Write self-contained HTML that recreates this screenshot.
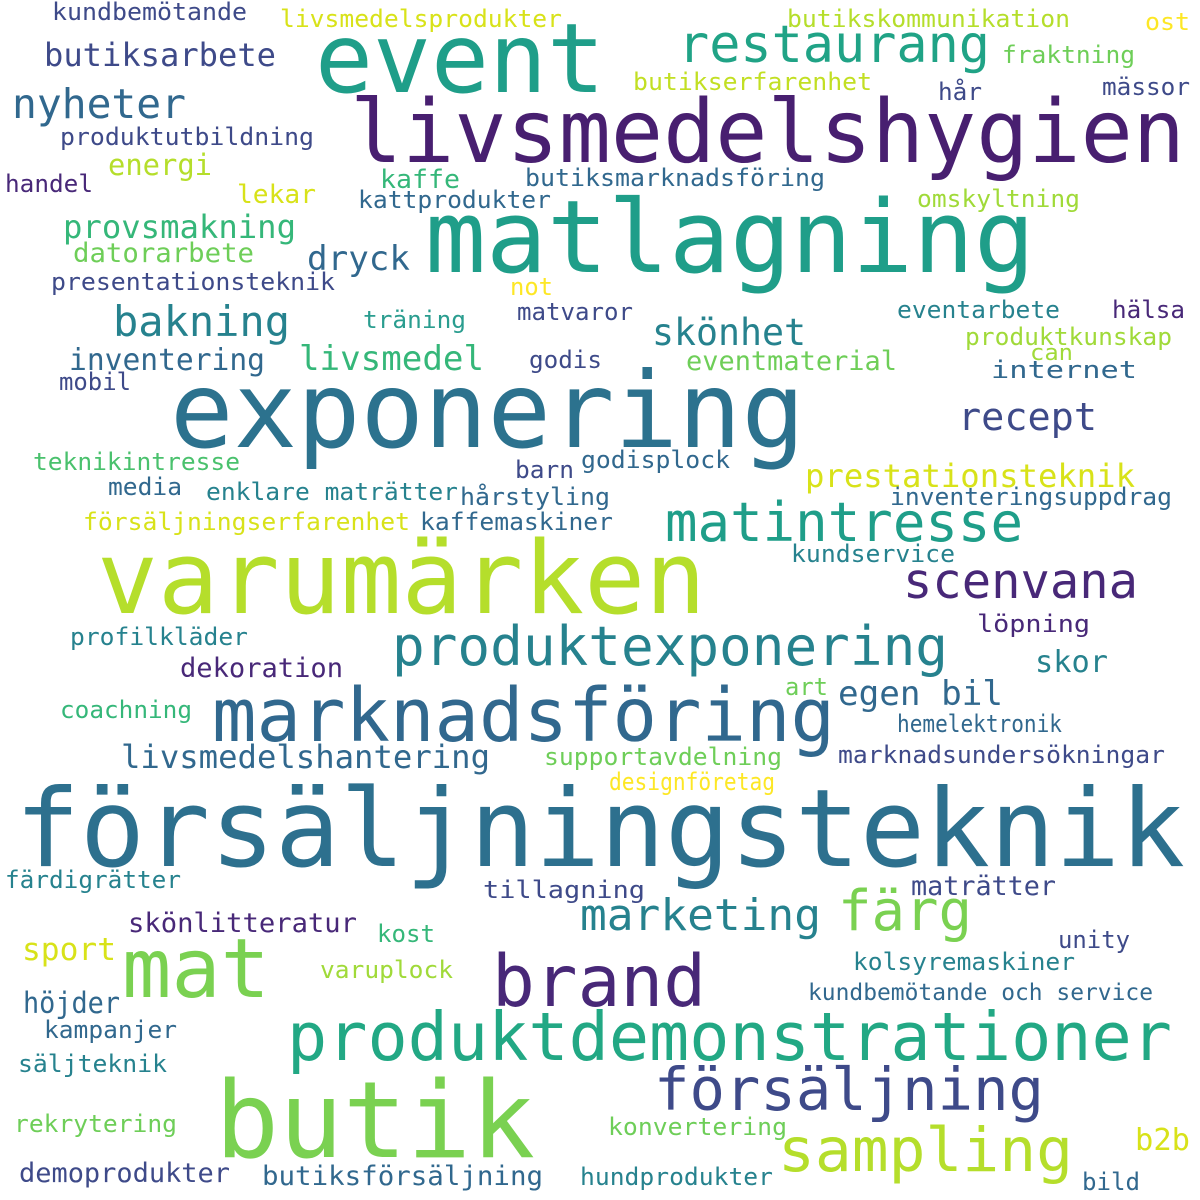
<!DOCTYPE html>
<html><head><meta charset="utf-8"><style>
html,body{margin:0;padding:0;background:#fff;}
svg{display:block}
text{font-family:"DejaVu Sans Mono","Liberation Mono",monospace;}
</style></head><body>
<svg width="1200" height="1200" viewBox="0 0 1200 1200" xmlns="http://www.w3.org/2000/svg">
<g lengthAdjust="spacingAndGlyphs">
<text x="52" y="20" font-size="24" fill="#3e4a89" textLength="195" lengthAdjust="spacingAndGlyphs">kundbemötande</text>
<text x="280" y="27" font-size="24" fill="#d8e219" textLength="282" lengthAdjust="spacingAndGlyphs">livsmedelsprodukter</text>
<text x="787" y="27" font-size="24" fill="#b5de2b" textLength="283" lengthAdjust="spacingAndGlyphs">butikskommunikation</text>
<text x="1145" y="30" font-size="24" fill="#fde725" textLength="45" lengthAdjust="spacingAndGlyphs">ost</text>
<text x="315" y="92" font-size="96" fill="#1f9e89" textLength="290" lengthAdjust="spacingAndGlyphs">event</text>
<text x="678" y="62" font-size="52" fill="#20a386" textLength="312" lengthAdjust="spacingAndGlyphs">restaurang</text>
<text x="1002" y="63" font-size="24" fill="#6ece58" textLength="133" lengthAdjust="spacingAndGlyphs">fraktning</text>
<text x="44" y="66" font-size="32" fill="#3e4a89" textLength="232" lengthAdjust="spacingAndGlyphs">butiksarbete</text>
<text x="633" y="90" font-size="24" fill="#c2df23" textLength="239" lengthAdjust="spacingAndGlyphs">butikserfarenhet</text>
<text x="938" y="100" font-size="24" fill="#3e4a89" textLength="44" lengthAdjust="spacingAndGlyphs">hår</text>
<text x="1102" y="95" font-size="24" fill="#3e4a89" textLength="88" lengthAdjust="spacingAndGlyphs">mässor</text>
<text x="350" y="162" font-size="87" fill="#481f70" textLength="835" lengthAdjust="spacingAndGlyphs">livsmedelshygien</text>
<text x="12" y="118" font-size="41" fill="#31688e" textLength="174" lengthAdjust="spacingAndGlyphs">nyheter</text>
<text x="60" y="145" font-size="24" fill="#3e4a89" textLength="254" lengthAdjust="spacingAndGlyphs">produktutbildning</text>
<text x="108" y="175" font-size="29" fill="#b5de2b" textLength="104" lengthAdjust="spacingAndGlyphs">energi</text>
<text x="5" y="192" font-size="24" fill="#482878" textLength="88" lengthAdjust="spacingAndGlyphs">handel</text>
<text x="425" y="272" font-size="101" fill="#1f9e89" textLength="610" lengthAdjust="spacingAndGlyphs">matlagning</text>
<text x="380" y="188" font-size="26" fill="#35b779" textLength="80" lengthAdjust="spacingAndGlyphs">kaffe</text>
<text x="525" y="186" font-size="24" fill="#31688e" textLength="300" lengthAdjust="spacingAndGlyphs">butiksmarknadsföring</text>
<text x="237" y="203" font-size="26" fill="#d8e219" textLength="79" lengthAdjust="spacingAndGlyphs">lekar</text>
<text x="358" y="208" font-size="24" fill="#31688e" textLength="193" lengthAdjust="spacingAndGlyphs">kattprodukter</text>
<text x="917" y="207" font-size="24" fill="#a0da39" textLength="163" lengthAdjust="spacingAndGlyphs">omskyltning</text>
<text x="63" y="238" font-size="32" fill="#35b779" textLength="233" lengthAdjust="spacingAndGlyphs">provsmakning</text>
<text x="73" y="262" font-size="27" fill="#6ece58" textLength="181" lengthAdjust="spacingAndGlyphs">datorarbete</text>
<text x="307" y="270" font-size="34" fill="#31688e" textLength="103" lengthAdjust="spacingAndGlyphs">dryck</text>
<text x="51" y="290" font-size="24" fill="#3e4a89" textLength="284" lengthAdjust="spacingAndGlyphs">presentationsteknik</text>
<text x="510" y="295" font-size="24" fill="#fde725" textLength="43" lengthAdjust="spacingAndGlyphs">not</text>
<text x="113" y="336" font-size="42" fill="#26828e" textLength="177" lengthAdjust="spacingAndGlyphs">bakning</text>
<text x="363" y="328" font-size="24" fill="#2a9d8f" textLength="103" lengthAdjust="spacingAndGlyphs">träning</text>
<text x="517" y="320" font-size="24" fill="#3e4a89" textLength="116" lengthAdjust="spacingAndGlyphs">matvaror</text>
<text x="897" y="318" font-size="24" fill="#26828e" textLength="163" lengthAdjust="spacingAndGlyphs">eventarbete</text>
<text x="1112" y="318" font-size="24" fill="#482878" textLength="73" lengthAdjust="spacingAndGlyphs">hälsa</text>
<text x="965" y="345" font-size="24" fill="#a0da39" textLength="207" lengthAdjust="spacingAndGlyphs">produktkunskap</text>
<text x="652" y="345" font-size="37" fill="#26828e" textLength="154" lengthAdjust="spacingAndGlyphs">skönhet</text>
<text x="1030" y="360" font-size="22" fill="#a0da39" textLength="43" lengthAdjust="spacingAndGlyphs">can</text>
<text x="69" y="370" font-size="30" fill="#31688e" textLength="196" lengthAdjust="spacingAndGlyphs">inventering</text>
<text x="299" y="370" font-size="34" fill="#35b779" textLength="185" lengthAdjust="spacingAndGlyphs">livsmedel</text>
<text x="529" y="368" font-size="24" fill="#3e4a89" textLength="73" lengthAdjust="spacingAndGlyphs">godis</text>
<text x="686" y="370" font-size="27" fill="#6ece58" textLength="211" lengthAdjust="spacingAndGlyphs">eventmaterial</text>
<text x="991" y="378" font-size="24" fill="#31688e" textLength="146" lengthAdjust="spacingAndGlyphs">internet</text>
<text x="59" y="390" font-size="24" fill="#3e4a89" textLength="72" lengthAdjust="spacingAndGlyphs">mobil</text>
<text x="170" y="447" font-size="105" fill="#2c728e" textLength="635" lengthAdjust="spacingAndGlyphs">exponering</text>
<text x="958" y="430" font-size="38" fill="#3e4a89" textLength="139" lengthAdjust="spacingAndGlyphs">recept</text>
<text x="33" y="470" font-size="24" fill="#4ac16d" textLength="207" lengthAdjust="spacingAndGlyphs">teknikintresse</text>
<text x="515" y="478" font-size="24" fill="#3e4a89" textLength="59" lengthAdjust="spacingAndGlyphs">barn</text>
<text x="581" y="468" font-size="24" fill="#31688e" textLength="149" lengthAdjust="spacingAndGlyphs">godisplock</text>
<text x="805" y="487" font-size="32" fill="#d8e219" textLength="330" lengthAdjust="spacingAndGlyphs">prestationsteknik</text>
<text x="108" y="495" font-size="24" fill="#31688e" textLength="74" lengthAdjust="spacingAndGlyphs">media</text>
<text x="206" y="500" font-size="24" fill="#26828e" textLength="252" lengthAdjust="spacingAndGlyphs">enklare maträtter</text>
<text x="460" y="505" font-size="24" fill="#31688e" textLength="150" lengthAdjust="spacingAndGlyphs">hårstyling</text>
<text x="890" y="505" font-size="24" fill="#31688e" textLength="282" lengthAdjust="spacingAndGlyphs">inventeringsuppdrag</text>
<text x="83" y="530" font-size="24" fill="#d8e219" textLength="327" lengthAdjust="spacingAndGlyphs">försäljningserfarenhet</text>
<text x="420" y="530" font-size="24" fill="#31688e" textLength="193" lengthAdjust="spacingAndGlyphs">kaffemaskiner</text>
<text x="665" y="541" font-size="54" fill="#1f9e89" textLength="358" lengthAdjust="spacingAndGlyphs">matintresse</text>
<text x="791" y="562" font-size="24" fill="#26828e" textLength="164" lengthAdjust="spacingAndGlyphs">kundservice</text>
<text x="97" y="613" font-size="101" fill="#b5de2b" textLength="609" lengthAdjust="spacingAndGlyphs">varumärken</text>
<text x="903" y="598" font-size="49" fill="#482878" textLength="235" lengthAdjust="spacingAndGlyphs">scenvana</text>
<text x="392" y="665" font-size="54" fill="#26828e" textLength="556" lengthAdjust="spacingAndGlyphs">produktexponering</text>
<text x="977" y="632" font-size="24" fill="#482878" textLength="113" lengthAdjust="spacingAndGlyphs">löpning</text>
<text x="70" y="645" font-size="24" fill="#26828e" textLength="178" lengthAdjust="spacingAndGlyphs">profilkläder</text>
<text x="180" y="677" font-size="27" fill="#482878" textLength="163" lengthAdjust="spacingAndGlyphs">dekoration</text>
<text x="1035" y="672" font-size="30" fill="#26828e" textLength="73" lengthAdjust="spacingAndGlyphs">skor</text>
<text x="785" y="695" font-size="24" fill="#6ece58" textLength="43" lengthAdjust="spacingAndGlyphs">art</text>
<text x="838" y="705" font-size="34" fill="#31688e" textLength="165" lengthAdjust="spacingAndGlyphs">egen bil</text>
<text x="60" y="718" font-size="24" fill="#35b779" textLength="132" lengthAdjust="spacingAndGlyphs">coachning</text>
<text x="212" y="741" font-size="74" fill="#31688e" textLength="623" lengthAdjust="spacingAndGlyphs">marknadsföring</text>
<text x="897" y="732" font-size="24" fill="#31688e" textLength="165" lengthAdjust="spacingAndGlyphs">hemelektronik</text>
<text x="121" y="768" font-size="32" fill="#31688e" textLength="369" lengthAdjust="spacingAndGlyphs">livsmedelshantering</text>
<text x="544" y="765" font-size="24" fill="#6ece58" textLength="238" lengthAdjust="spacingAndGlyphs">supportavdelning</text>
<text x="838" y="763" font-size="24" fill="#3e4a89" textLength="327" lengthAdjust="spacingAndGlyphs">marknadsundersökningar</text>
<text x="609" y="790" font-size="24" fill="#fde725" textLength="166" lengthAdjust="spacingAndGlyphs">designföretag</text>
<text x="15" y="866" font-size="108" fill="#2d708e" textLength="1170" lengthAdjust="spacingAndGlyphs">försäljningsteknik</text>
<text x="5" y="888" font-size="24" fill="#26828e" textLength="176" lengthAdjust="spacingAndGlyphs">färdigrätter</text>
<text x="483" y="898" font-size="24" fill="#3e4a89" textLength="162" lengthAdjust="spacingAndGlyphs">tillagning</text>
<text x="911" y="895" font-size="27" fill="#3e4a89" textLength="145" lengthAdjust="spacingAndGlyphs">maträtter</text>
<text x="580" y="930" font-size="44" fill="#26828e" textLength="241" lengthAdjust="spacingAndGlyphs">marketing</text>
<text x="838" y="930" font-size="56" fill="#7ad151" textLength="134" lengthAdjust="spacingAndGlyphs">färg</text>
<text x="128" y="932" font-size="27" fill="#482878" textLength="229" lengthAdjust="spacingAndGlyphs">skönlitteratur</text>
<text x="377" y="942" font-size="24" fill="#35b779" textLength="58" lengthAdjust="spacingAndGlyphs">kost</text>
<text x="1058" y="948" font-size="24" fill="#3e4a89" textLength="72" lengthAdjust="spacingAndGlyphs">unity</text>
<text x="22" y="960" font-size="31" fill="#d8e219" textLength="94" lengthAdjust="spacingAndGlyphs">sport</text>
<text x="122" y="997" font-size="82" fill="#7ad151" textLength="148" lengthAdjust="spacingAndGlyphs">mat</text>
<text x="492" y="1006" font-size="71" fill="#482878" textLength="214" lengthAdjust="spacingAndGlyphs">brand</text>
<text x="320" y="978" font-size="24" fill="#a0da39" textLength="133" lengthAdjust="spacingAndGlyphs">varuplock</text>
<text x="853" y="970" font-size="24" fill="#26828e" textLength="222" lengthAdjust="spacingAndGlyphs">kolsyremaskiner</text>
<text x="23" y="1013" font-size="29" fill="#31688e" textLength="97" lengthAdjust="spacingAndGlyphs">höjder</text>
<text x="808" y="1000" font-size="23" fill="#31688e" textLength="345" lengthAdjust="spacingAndGlyphs">kundbemötande och service</text>
<text x="44" y="1038" font-size="24" fill="#31688e" textLength="133" lengthAdjust="spacingAndGlyphs">kampanjer</text>
<text x="287" y="1060" font-size="67" fill="#22a884" textLength="885" lengthAdjust="spacingAndGlyphs">produktdemonstrationer</text>
<text x="18" y="1072" font-size="24" fill="#26828e" textLength="149" lengthAdjust="spacingAndGlyphs">säljteknik</text>
<text x="654" y="1110" font-size="59" fill="#3e4a89" textLength="390" lengthAdjust="spacingAndGlyphs">försäljning</text>
<text x="215" y="1157" font-size="106" fill="#7ad151" textLength="320" lengthAdjust="spacingAndGlyphs">butik</text>
<text x="14" y="1132" font-size="24" fill="#6ece58" textLength="163" lengthAdjust="spacingAndGlyphs">rekrytering</text>
<text x="608" y="1135" font-size="24" fill="#6ece58" textLength="179" lengthAdjust="spacingAndGlyphs">konvertering</text>
<text x="1135" y="1150" font-size="30" fill="#d8e219" textLength="55" lengthAdjust="spacingAndGlyphs">b2b</text>
<text x="778" y="1171" font-size="61" fill="#b5de2b" textLength="295" lengthAdjust="spacingAndGlyphs">sampling</text>
<text x="19" y="1182" font-size="27" fill="#3e4a89" textLength="211" lengthAdjust="spacingAndGlyphs">demoprodukter</text>
<text x="262" y="1185" font-size="27" fill="#31688e" textLength="281" lengthAdjust="spacingAndGlyphs">butiksförsäljning</text>
<text x="580" y="1185" font-size="24" fill="#26828e" textLength="193" lengthAdjust="spacingAndGlyphs">hundprodukter</text>
<text x="1082" y="1190" font-size="24" fill="#31688e" textLength="58" lengthAdjust="spacingAndGlyphs">bild</text>
</g>
</svg>
</body></html>
